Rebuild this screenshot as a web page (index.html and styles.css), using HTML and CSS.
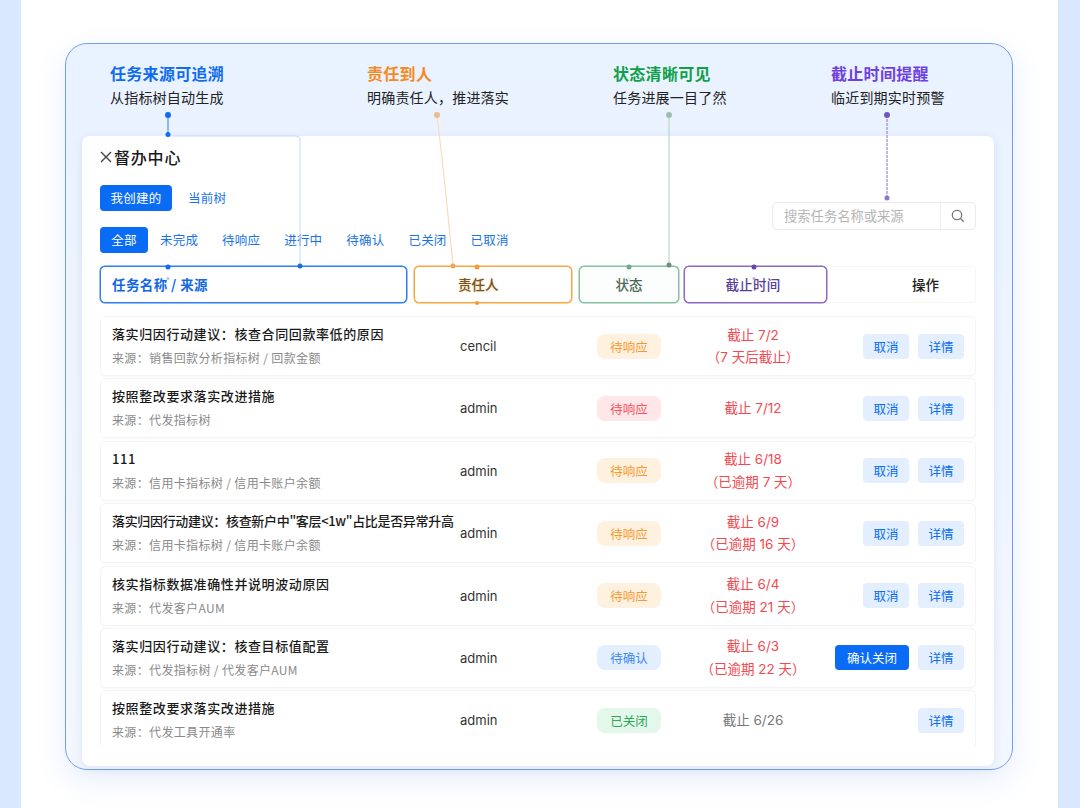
FILE: index.html
```html
<!DOCTYPE html>
<html lang="zh-CN">
<head>
    <meta charset="UTF-8">
    <meta name="viewport" content="width=device-width, initial-scale=1.0">
    <title>督办中心</title>
    <link rel="stylesheet" href="styles.css">
</head>
<body>
    <div class="page">
        <div class="frame">
            <div class="notes">
                <div class="note note-blue"><h3>任务来源可追溯</h3><p>从指标树自动生成</p></div>
                <div class="note note-orange"><h3>责任到人</h3><p>明确责任人，推进落实</p></div>
                <div class="note note-green"><h3>状态清晰可见</h3><p>任务进展一目了然</p></div>
                <div class="note note-purple"><h3>截止时间提醒</h3><p>临近到期实时预警</p></div>
            </div>

            <div class="card">
                <div class="card-title">
                    <svg class="close-icon" width="12" height="12" viewBox="0 0 12 12"><path d="M1 1l10 10M11 1L1 11" stroke="#444" stroke-width="1.4" fill="none"/></svg>
                    <span>督办中心</span>
                </div>

                <div class="toolbar">
                    <div>
                        <div class="tabs tabs-scope">
                            <span class="tab tab-active tab-wide">我创建的</span>
                            <span class="tab">当前树</span>
                        </div>
                        <div class="tabs tabs-state">
                            <span class="tab tab-active tab-all">全部</span>
                            <span class="tab">未完成</span>
                            <span class="tab">待响应</span>
                            <span class="tab">进行中</span>
                            <span class="tab">待确认</span>
                            <span class="tab">已关闭</span>
                            <span class="tab">已取消</span>
                        </div>
                    </div>
                    <div class="search">
                        <span class="search-text">搜索任务名称或来源</span>
                        <span class="search-btn">
                            <svg width="14" height="14" viewBox="0 0 14 14"><circle cx="6" cy="6" r="4.7" stroke="#777" stroke-width="1.3" fill="none"/><path d="M9.5 9.5l3.2 3.2" stroke="#777" stroke-width="1.3"/></svg>
                        </span>
                    </div>
                </div>

                <div class="thead">
                    <div class="th th-name">任务名称 / 来源</div>
                    <div class="th th-owner">责任人</div>
                    <div class="th th-state">状态</div>
                    <div class="th th-date">截止时间</div>
                    <div class="th th-ops">操作</div>
                </div>

                <div class="list">
                    <div class="row">
                        <div><div class="task">落实归因行动建议：核查合同回款率低的原因</div><div class="src">来源：销售回款分析指标树 / 回款金额</div></div>
                        <div class="owner">cencil</div>
                        <span class="pill pill-orange">待响应</span>
                        <div class="due"><p>截止 7/2</p><p>（7 天后截止）</p></div>
                        <div class="ops"><span class="btn">取消</span><span class="btn">详情</span></div>
                    </div>
                    <div class="row">
                        <div><div class="task">按照整改要求落实改进措施</div><div class="src">来源：代发指标树</div></div>
                        <div class="owner">admin</div>
                        <span class="pill pill-red">待响应</span>
                        <div class="due"><p>截止 7/12</p></div>
                        <div class="ops"><span class="btn">取消</span><span class="btn">详情</span></div>
                    </div>
                    <div class="row">
                        <div><div class="task">111</div><div class="src">来源：信用卡指标树 / 信用卡账户余额</div></div>
                        <div class="owner">admin</div>
                        <span class="pill pill-orange">待响应</span>
                        <div class="due"><p>截止 6/18</p><p>（已逾期 7 天）</p></div>
                        <div class="ops"><span class="btn">取消</span><span class="btn">详情</span></div>
                    </div>
                    <div class="row">
                        <div><div class="task task-tight">落实归因行动建议：核查新户中"客层&lt;1w"占比是否异常升高</div><div class="src">来源：信用卡指标树 / 信用卡账户余额</div></div>
                        <div class="owner">admin</div>
                        <span class="pill pill-orange">待响应</span>
                        <div class="due"><p>截止 6/9</p><p>（已逾期 16 天）</p></div>
                        <div class="ops"><span class="btn">取消</span><span class="btn">详情</span></div>
                    </div>
                    <div class="row">
                        <div><div class="task">核实指标数据准确性并说明波动原因</div><div class="src">来源：代发客户AUM</div></div>
                        <div class="owner">admin</div>
                        <span class="pill pill-orange">待响应</span>
                        <div class="due"><p>截止 6/4</p><p>（已逾期 21 天）</p></div>
                        <div class="ops"><span class="btn">取消</span><span class="btn">详情</span></div>
                    </div>
                    <div class="row">
                        <div><div class="task">落实归因行动建议：核查目标值配置</div><div class="src">来源：代发指标树 / 代发客户AUM</div></div>
                        <div class="owner">admin</div>
                        <span class="pill pill-blue">待确认</span>
                        <div class="due"><p>截止 6/3</p><p>（已逾期 22 天）</p></div>
                        <div class="ops"><span class="btn btn-primary">确认关闭</span><span class="btn">详情</span></div>
                    </div>
                    <div class="row">
                        <div><div class="task">按照整改要求落实改进措施</div><div class="src">来源：代发工具开通率</div></div>
                        <div class="owner">admin</div>
                        <span class="pill pill-green">已关闭</span>
                        <div class="due due-done"><p>截止 6/26</p></div>
                        <div class="ops"><span class="btn">详情</span></div>
                    </div>
                </div>
            </div>
        </div>
    </div>

    <!-- 标注连线 -->
    <svg class="wires" width="1080" height="808" viewBox="0 0 1080 808" fill="none">
        <path d="M168 115V134" stroke="#8db9f7" stroke-width="2"/>
        <path d="M168 136H296Q300 136 300 140V266" stroke="#c4dafa" stroke-width="1"/>
        <circle cx="168" cy="115" r="3" fill="#0f6cf0"/>
        <circle cx="168" cy="134.500" r="2.500" fill="#0f6cf0"/>
        <circle cx="168" cy="267" r="2.500" fill="#0f6cf0"/>
        <circle cx="168" cy="278.500" r="1.500" fill="#a9c8f5"/>
        <circle cx="300" cy="266" r="2.500" fill="#1a6fd8"/>

        <path d="M437 115Q446 190 453 266" stroke="#f8dcbc" stroke-width="1.200"/>
        <circle cx="437" cy="115" r="3" fill="#e9bd8a"/>
        <circle cx="453" cy="266" r="2.500" fill="#f3a652"/>
        <circle cx="477" cy="267" r="2.500" fill="#f09a3a"/>
        <circle cx="477" cy="303" r="2" fill="#f09a3a"/>

        <path d="M669 115V265" stroke="#bcd4ca" stroke-width="1.200"/>
        <circle cx="669" cy="115" r="3" fill="#9dbfae"/>
        <circle cx="669" cy="265" r="2.500" fill="#6f8f83"/>
        <circle cx="629" cy="267" r="2.500" fill="#6fa98d"/>
        <circle cx="629" cy="278.500" r="1.500" fill="#dcefe6"/>

        <path d="M887 115V198" stroke="#9a85d2" stroke-width="1.200" stroke-dasharray="3 1"/>
        <circle cx="887" cy="115" r="3" fill="#7355c0"/>
        <circle cx="887" cy="198" r="2.500" fill="#8e76c9"/>
        <circle cx="754" cy="267" r="2.500" fill="#6a43ad"/>
        <circle cx="754" cy="278.500" r="1.500" fill="#b9a5de"/>
    </svg>
</body>
</html>
```

FILE: styles.css
```css
* {
    box-sizing: border-box;
}
html, body {
    margin: 0;
    height: 808px;
    overflow: hidden;
}
body {
    position: relative;
    background: #d9e8fe;
    font-family: "Noto Sans CJK SC", "Liberation Sans", sans-serif;
    color: #1a1a1a;
}
p, h3 {
    margin: 0;
}
.page {
    margin: 0 22px 0 21px;
    height: 808px;
    padding: 43px 45px 0 44px;
    background: #fff;
}
.frame {
    height: 727px;
    padding: 0 18px 0 16px;
    border: 1px solid #6f9ff5;
    border-radius: 22px;
    background: linear-gradient(180deg, #e9f2ff 0%, #f3f7ff 100%);
    box-shadow: 0 10px 30px rgba(80, 130, 240, 0.14);
}

/* 顶部说明 */
.notes {
    display: grid;
    grid-template-columns: 257px 246px 218px auto;
    height: 92px;
    padding: 18px 0 0 28px;
}
.note h3 {
    font-size: 16px;
    line-height: 22px;
    font-weight: 700;
    letter-spacing: 0.3px;
}
.note p {
    margin-top: 2px;
    font-size: 14px;
    line-height: 22px;
    letter-spacing: 0.2px;
    color: #222;
}
.note-blue h3 { color: #0f6cf0; }
.note-orange h3 { color: #f58a1f; }
.note-green h3 { color: #0fa04a; }
.note-purple h3 { color: #6f3fe0; }

/* 主卡片 */
.card {
    height: 630px;
    padding: 0 18px;
    background: #fff;
    border-radius: 8px;
    box-shadow: 0 2px 10px rgba(60, 90, 150, 0.12);
    overflow: hidden;
}
.card-title {
    display: flex;
    align-items: center;
    gap: 2px;
    height: 22px;
    margin-top: 10px;
    font-size: 16px;
    font-weight: 500;
    letter-spacing: 0.8px;
}
.card-title span {
    line-height: 22px;
}
.close-icon {
    flex: none;
}
.toolbar {
    display: flex;
    justify-content: space-between;
    align-items: flex-start;
    height: 81px;
    margin-top: 17px;
}
.tabs {
    display: flex;
    align-items: center;
    font-size: 12.500px;
    color: #1a73e8;
}
.tab {
    line-height: 26px;
    letter-spacing: 0.2px;
}
.tab-active {
    height: 26px;
    border-radius: 4px;
    background: #0a6cf5;
    color: #fff;
    text-align: center;
}
.tabs-scope {
    gap: 16px;
}
.tabs-state {
    gap: 24px;
    margin-top: 16px;
}
.tab-wide {
    width: 72px;
}
.tab-all {
    width: 48px;
    margin-right: -12px;
}
.search {
    display: flex;
    width: 204px;
    height: 28px;
    margin-top: 17px;
    border: 1px solid #e8eaee;
    border-radius: 5px;
    background: #fff;
}
.search-text {
    flex: 1;
    padding-left: 11px;
    font-size: 13.300px;
    line-height: 26px;
    color: #b5b5b5;
}
.search-btn {
    display: flex;
    align-items: center;
    justify-content: center;
    width: 35px;
    border-left: 1px solid #eceef1;
}

/* 表头 */
.thead {
    display: flex;
    height: 37px;
    border-radius: 4px;
    box-shadow: inset 0 0 0 1px #f6f7f8;
    font-size: 13.500px;
    font-weight: 500;
    line-height: 35px;
}
.th {
    border: 1px solid;
    border-radius: 5px;
    background: #fff;
}
.th-name {
    width: 307px;
    padding-left: 11px;
    border-color: #2f7df0;
    box-shadow: 0 0 0 0.5px #2f7df0;
    color: #1268e0;
    font-weight: 700;
    letter-spacing: 0.4px;
}
.th-owner {
    width: 158px;
    margin-left: 7px;
    padding-left: 43px;
    border-color: #f5a83e;
    box-shadow: 0 0 0 0.5px #f5a83e;
    color: #75562a;
    text-shadow: 0 0 2px #f5c27e;
}
.th-state {
    width: 100px;
    margin-left: 7px;
    border-color: #86c0a2;
    box-shadow: 0 0 0 0.5px #86c0a2;
    color: #4c6a5b;
    background: #fbfefc;
    text-align: center;
}
.th-date {
    width: 143px;
    margin-left: 5px;
    padding-right: 5px;
    border-color: #8a68c4;
    box-shadow: 0 0 0 0.5px #8a68c4;
    color: #58409a;
    letter-spacing: 0.200px;
    text-align: center;
}
.th-ops {
    flex: 1;
    border: 0;
    padding-left: 85px;
    background: none;
    color: #222;
    line-height: 37px;
}

/* 任务列表 */
.list {
    display: flex;
    flex-direction: column;
    gap: 2.400px;
    height: 431px;
    margin-top: 13px;
    overflow: hidden;
}
.row {
    flex: none;
    display: grid;
    grid-template-columns: 348px 137px 64px 172px 1fr;
    align-items: center;
    height: 60px;
    padding: 0 11px;
    border: 1px solid #f3f4f5;
    border-radius: 5px;
    box-shadow: 0 1px 2px rgba(0, 0, 0, 0.03);
}
.task {
    margin-top: -1px;
    font-size: 13px;
    font-weight: 500;
    line-height: 22px;
    letter-spacing: 0.6px;
    white-space: nowrap;
}
.task-tight {
    letter-spacing: -0.330px;
}
.src {
    margin-top: 3px;
    font-size: 12px;
    line-height: 20px;
    color: #8a8a8a;
    letter-spacing: 0.350px;
    white-space: nowrap;
}
.owner {
    font-family: "Inter", "Noto Sans CJK SC", sans-serif;
    font-size: 13px;
    color: #333;
}
.pill {
    height: 25px;
    border-radius: 8px;
    font-size: 12.500px;
    line-height: 25px;
    text-align: center;
}
.pill-orange { background: #fff1df; color: #f59a32; }
.pill-red { background: #ffe6e8; color: #f5555f; }
.pill-blue { background: #e3efff; color: #3d87f0; }
.pill-green { background: #e3f7ea; color: #2aa85a; }
.due {
    padding-left: 12px;
    font-family: "Inter", "Noto Sans CJK SC", sans-serif;
    font-size: 13.500px;
    line-height: 22.500px;
    color: #f5484f;
    text-align: center;
    white-space: nowrap;
}
.due-done {
    color: #777;
}
.ops {
    display: flex;
    justify-content: flex-end;
    gap: 9px;
}
.btn {
    width: 46px;
    height: 25px;
    border-radius: 4px;
    background: #e3efff;
    color: #0a6cf5;
    font-size: 12.500px;
    line-height: 25px;
    text-align: center;
}
.btn-primary {
    width: 74px;
    background: #0a6cf5;
    color: #fff;
}
.wires {
    position: absolute;
    top: 0;
    left: 0;
    pointer-events: none;
}
```
